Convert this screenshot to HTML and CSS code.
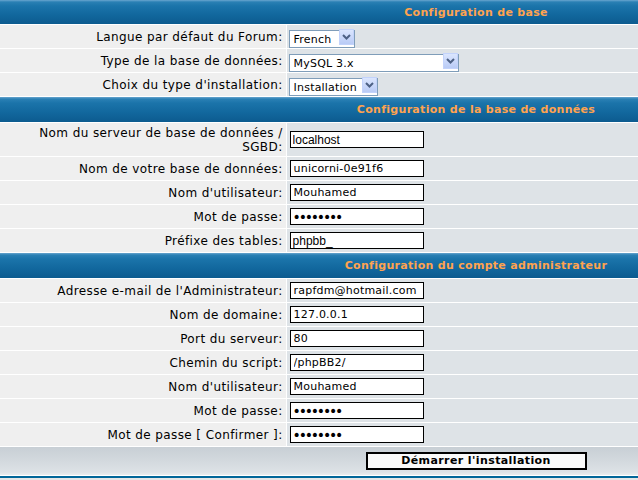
FILE: index.html
```html
<!DOCTYPE html>
<html lang="fr">
<head>
<meta charset="utf-8">
<title>Installation phpBB</title>
<link rel="stylesheet" href="styles.css">
</head>
<body>
<div class="forumline">
  <div class="th first">Configuration de base</div>

  <div class="lbl">Langue par défaut du Forum:</div>
  <div class="fld">
    <span class="sel w-lang"><select><option>French</option></select><span class="arrow"><svg width="9" height="6" viewBox="0 0 9 6"><path d="M1 1 L4.5 4.5 L8 1" fill="none" stroke="#4d6185" stroke-width="2"/></svg></span></span>
  </div>

  <div class="lbl">Type de la base de données:</div>
  <div class="fld">
    <span class="sel w-db"><select><option>MySQL 3.x</option></select><span class="arrow"><svg width="9" height="6" viewBox="0 0 9 6"><path d="M1 1 L4.5 4.5 L8 1" fill="none" stroke="#4d6185" stroke-width="2"/></svg></span></span>
  </div>

  <div class="lbl">Choix du type d'installation:</div>
  <div class="fld">
    <span class="sel w-inst"><select><option>Installation</option></select><span class="arrow"><svg width="9" height="6" viewBox="0 0 9 6"><path d="M1 1 L4.5 4.5 L8 1" fill="none" stroke="#4d6185" stroke-width="2"/></svg></span></span>
  </div>

  <div class="th">Configuration de la base de données</div>

  <div class="lbl tall">Nom du serveur de base de données / SGBD:</div>
  <div class="fld tall"><input class="txt alt" type="text" value="localhost"></div>

  <div class="lbl">Nom de votre base de données:</div>
  <div class="fld"><input class="txt" type="text" value="unicorni-0e91f6"></div>

  <div class="lbl">Nom d'utilisateur:</div>
  <div class="fld"><input class="txt" type="text" value="Mouhamed"></div>

  <div class="lbl">Mot de passe:</div>
  <div class="fld"><input class="txt pw" type="password" value="12345678"></div>

  <div class="lbl">Préfixe des tables:</div>
  <div class="fld"><input class="txt alt" type="text" value="phpbb_"></div>

  <div class="th">Configuration du compte administrateur</div>

  <div class="lbl">Adresse e-mail de l'Administrateur:</div>
  <div class="fld"><input class="txt" type="text" value="rapfdm@hotmail.com"></div>

  <div class="lbl">Nom de domaine:</div>
  <div class="fld"><input class="txt" type="text" value="127.0.0.1"></div>

  <div class="lbl">Port du serveur:</div>
  <div class="fld"><input class="txt" type="text" value="80"></div>

  <div class="lbl">Chemin du script:</div>
  <div class="fld"><input class="txt" type="text" value="/phpBB2/"></div>

  <div class="lbl">Nom d'utilisateur:</div>
  <div class="fld"><input class="txt" type="text" value="Mouhamed"></div>

  <div class="lbl">Mot de passe:</div>
  <div class="fld"><input class="txt pw" type="password" value="12345678"></div>

  <div class="lbl">Mot de passe [ Confirmer ]:</div>
  <div class="fld"><input class="txt pw" type="password" value="12345678"></div>

  <div class="cat"><button class="mainoption" type="button">Démarrer l'installation</button></div>
</div>
</body>
</html>
```
FILE: styles.css
```css
html, body {
  margin: 0;
  padding: 0;
}
body {
  background: #e5e5e5;
  overflow: hidden;
  font-family: "DejaVu Sans", Verdana, sans-serif;
  color: #000;
}
.forumline {
  width: 952px;
  display: grid;
  grid-template-columns: 30% 1fr;
  gap: 1px;
  background: #fff;
  padding-bottom: 1px;
  border-bottom: 2px solid #006699;
}
.th {
  grid-column: 1 / -1;
  height: 25px;
  display: flex;
  align-items: center;
  justify-content: center;
  font-size: 11px;
  font-weight: bold;
  letter-spacing: 0.3px;
  color: #ffa34f;
  background: linear-gradient(to bottom, #6aa6cf 0, #2a80b4 2px, #1b74aa 6px, #12689e 60%, #0c5b8f 100%);
}
.th.first {
  height: 24px;
}
.lbl {
  height: 23px;
  background: #efefef;
  display: flex;
  align-items: center;
  justify-content: flex-end;
  text-align: right;
  padding-right: 3px;
  font-size: 12px;
  letter-spacing: 0.4px;
  line-height: 14px;
}
.fld {
  height: 23px;
  background: #dee3e7;
  display: flex;
  align-items: center;
  padding-left: 2px;
}
.tall {
  height: 33px;
}
.sel {
  position: relative;
  display: inline-block;
  height: 18px;
}
.sel select {
  -webkit-appearance: none;
  appearance: none;
  box-sizing: border-box;
  height: 18px;
  margin: 0;
  border: 1px solid #7f9db9;
  border-radius: 0;
  background: #fff;
  color: #000;
  font-family: "DejaVu Sans", Verdana, sans-serif;
  font-size: 11px;
  letter-spacing: 0.2px;
  padding: 0 18px 0 4px;
}
.w-lang select { width: 66px; }
.w-db select { width: 170px; }
.w-inst select { width: 89px; }
.arrow {
  position: absolute;
  top: 1px;
  right: 1px;
  width: 15px;
  height: 16px;
  box-sizing: border-box;
  border: 1px solid #c3d3fb;
  background: linear-gradient(to bottom, #dbe6fe, #b9cbf6);
  display: flex;
  align-items: center;
  justify-content: center;
}
.arrow svg {
  display: block;
}
.txt {
  box-sizing: border-box;
  width: 134px;
  height: 17px;
  margin: 0 0 0 1px;
  border: 1px solid #000;
  background: #fff;
  color: #000;
  font-family: "DejaVu Sans", Verdana, sans-serif;
  font-size: 11px;
  letter-spacing: 0.2px;
  padding: 0 3px;
}
.txt.alt {
  font-family: "Liberation Sans", Arial, sans-serif;
  font-size: 12px;
  letter-spacing: 0;
  padding: 0 2px;
}
.txt.pw {
  font-size: 14px;
  letter-spacing: -2.2px;
  padding: 0 3px 0 2px;
}
.cat {
  grid-column: 1 / -1;
  height: 28px;
  display: flex;
  align-items: center;
  justify-content: center;
  background: linear-gradient(to bottom, #c8cfd5 0, #d3d9de 50%, #dde2e6 90%, #e9ecee 100%);
}
.mainoption {
  box-sizing: border-box;
  width: 221px;
  height: 18px;
  margin: 0;
  padding: 0;
  border: 2px solid #000;
  background: #fafafa;
  color: #000;
  font-family: "DejaVu Sans", Verdana, sans-serif;
  font-size: 11px;
  font-weight: bold;
  letter-spacing: 0.4px;
  line-height: 14px;
}
```
